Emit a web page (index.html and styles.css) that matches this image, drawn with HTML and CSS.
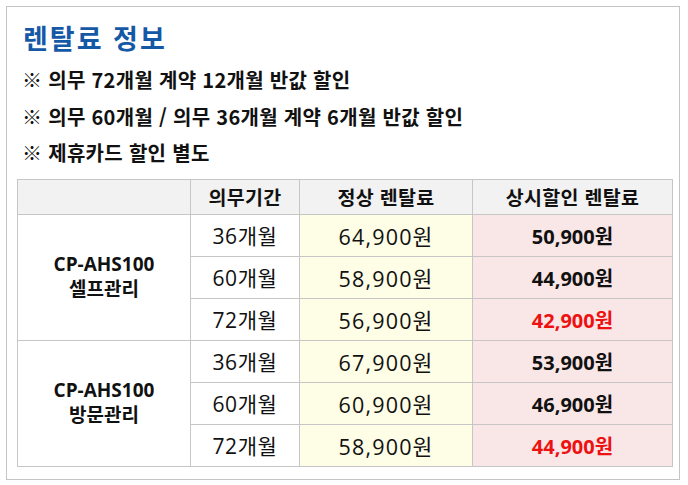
FILE: index.html
```html
<!DOCTYPE html>
<html lang="ko">
<head>
<meta charset="utf-8">
<link rel="stylesheet" href="styles.css">
</head>
<body>
<div class="card">
  <h1 class="title">렌탈료 정보</h1>
  <p class="note">※ 의무 72개월 계약 12개월 반값 할인</p>
  <p class="note">※ 의무 60개월 / 의무 36개월 계약 6개월 반값 할인</p>
  <p class="note">※ 제휴카드 할인 별도</p>
  <table class="price">
    <colgroup>
      <col class="c-model"><col class="c-term"><col class="c-normal"><col class="c-sale">
    </colgroup>
    <thead>
      <tr><th></th><th>의무기간</th><th>정상 렌탈료</th><th>상시할인 렌탈료</th></tr>
    </thead>
    <tbody>
      <tr><td class="model" rowspan="3">CP-AHS100<br>셀프관리</td><td class="term">36개월</td><td class="normal">64,900원</td><td class="sale">50,900원</td></tr>
      <tr><td class="term">60개월</td><td class="normal">58,900원</td><td class="sale">44,900원</td></tr>
      <tr><td class="term">72개월</td><td class="normal">56,900원</td><td class="sale red">42,900원</td></tr>
      <tr><td class="model" rowspan="3">CP-AHS100<br>방문관리</td><td class="term">36개월</td><td class="normal">67,900원</td><td class="sale">53,900원</td></tr>
      <tr><td class="term">60개월</td><td class="normal">60,900원</td><td class="sale">46,900원</td></tr>
      <tr><td class="term">72개월</td><td class="normal">58,900원</td><td class="sale red">44,900원</td></tr>
    </tbody>
  </table>
</div>
</body>
</html>
```

FILE: styles.css
```css
html, body {
  margin: 0;
  padding: 0;
  background: #ffffff;
}
body {
  font-family: "Open Sans", "Noto Sans CJK KR", sans-serif;
  color: #111;
}
.card {
  margin: 6px 7px 0 6px;
  width: 674px;
  height: 474px;
  box-sizing: border-box;
  border: 1px solid #c4c4c4;
  padding: 13px 9px 0 10px;
}
.title {
  margin: 0 0 6px 6px;
  font-family: "Noto Sans CJK KR", sans-serif;
  font-size: 27px;
  letter-spacing: 2px;
  font-weight: 700;
  line-height: 36px;
  color: #1558a6;
}
.note {
  margin: 0 0 0 5px;
  font-family: "Noto Sans CJK KR", sans-serif;
  font-size: 20px;
  letter-spacing: 0.3px;
  font-weight: 700;
  line-height: 36.5px;
  color: #111;
}
.price {
  margin-top: 7px;
  border-collapse: collapse;
  width: 655px;
  table-layout: fixed;
  border: 1px solid #c6c6c6;
}
.c-model { width: 173px; }
.c-term { width: 109px; }
.c-normal { width: 173px; }
.c-sale { width: 200px; }
.price th, .price td {
  border: 1px solid #c6c6c6;
  text-align: center;
  padding: 0;
  font-size: 19px;
}
.price th {
  height: 34px;
  background: #f2f2f2;
  font-weight: 700;
  font-family: "Noto Sans CJK KR", sans-serif;
  font-size: 19.5px;
  letter-spacing: 0.3px;
}
.price td {
  height: 41px;
  font-weight: 400;
}
.price td.term {
  font-size: 21px;
  letter-spacing: 0.6px;
}
.price td.model {
  font-weight: 700;
  font-size: 19px;
  line-height: 25px;
}
.price td.normal {
  background: #fefde6;
  font-size: 21.5px;
  letter-spacing: 1.2px;
}
.price td.sale {
  background: #f9e7e7;
  font-weight: 700;
  font-size: 20px;
}
.price td.red {
  color: #ee1111;
}
```
